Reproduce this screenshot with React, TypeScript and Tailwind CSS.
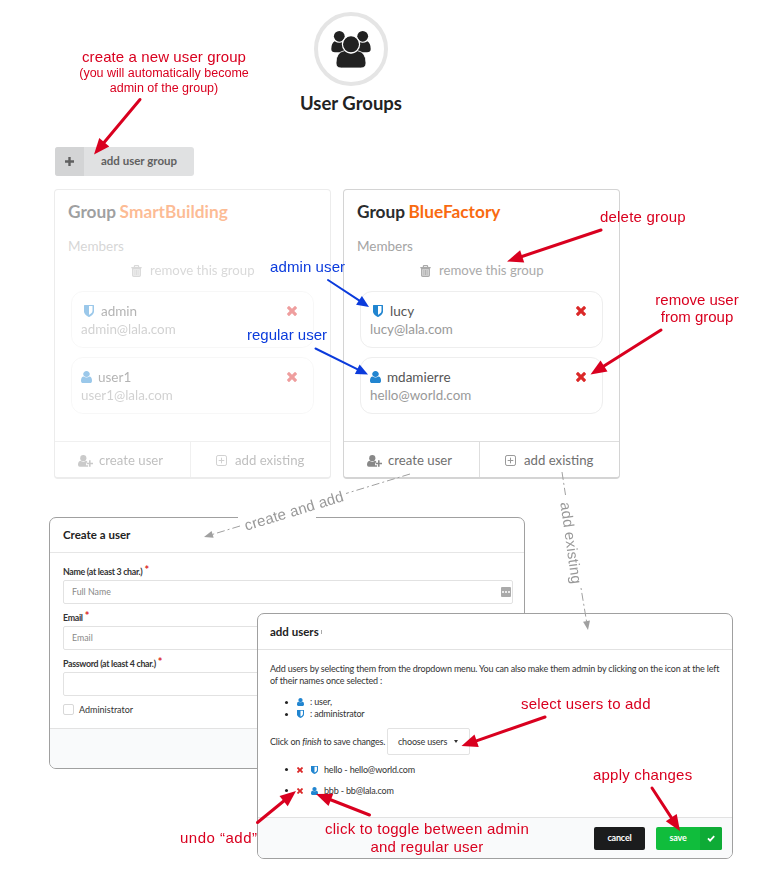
import type { ReactNode } from "react";

type IconProps = { className?: string };

function UserIcon({ className }: IconProps) {
  return (
    <svg viewBox="0 0 1280 1536" fill="currentColor" preserveAspectRatio="none" className={className}>
      <path d="M1280 1271q0 109-62.5 187t-150.5 78H213q-88 0-150.5-78T0 1271q0-85 8.5-160.5t31.5-152 58.5-131 94-89T327 704q131 128 313 128t313-128q76 0 134.5 34.5t94 89 58.5 131 31.5 152 8.5 160.5zm-256-887q0 159-112.5 271.5T640 768 368.5 655.5 256 384t112.5-271.5T640 0t271.5 112.5T1024 384z" />
    </svg>
  );
}

function ShieldIcon({ className }: IconProps) {
  return (
    <svg viewBox="0 64 1280 1536" fill="currentColor" preserveAspectRatio="none" className={className}>
      <path d="M1088 832V192H640v1137q119-63 213-137 235-184 235-360zm192-704v768q0 86-33.5 170.5t-83 150-118 127.5-126.5 103-121 77.5-89.5 49.5-42.5 20q-12 6-26 6t-26-6q-16-7-42.5-20t-89.5-49.5-121-77.5-126.5-103-118-127.5-83-150T0 896V128q0-26 19-45t45-19h1152q26 0 45 19t19 45z" />
    </svg>
  );
}

function CrossIcon({ className }: IconProps) {
  return (
    <svg viewBox="110 366 1188 1188" fill="currentColor" className={className}>
      <path d="M1298 1322q0 40-28 68l-136 136q-28 28-68 28t-68-28l-294-294-294 294q-28 28-68 28t-68-28l-136-136q-28-28-28-68t28-68l294-294-294-294q-28-28-28-68t28-68l136-136q28-28 68-28t68 28l294 294 294-294q28-28 68-28t68 28l136 136q28 28 28 68t-28 68l-294 294 294 294q28 28 28 68z" />
    </svg>
  );
}

function TrashIcon({ className }: IconProps) {
  return (
    <svg viewBox="0 0 11 12" className={className}>
      <path d="M3.4 2.2V1.3q0-.7.7-.7h2.8q.7 0 .7.7v.9M.3 2.6h10.4" fill="none" stroke="currentColor" strokeWidth="1.2" />
      <path d="M1.6 3.6h7.8v6.6q0 1.2-1.2 1.2H2.8q-1.2 0-1.2-1.2z" fill="currentColor" fillOpacity="0.45" stroke="currentColor" strokeWidth="1.1" />
      <path d="M3.9 5v5M5.5 5v5M7.1 5v5" stroke="currentColor" strokeWidth="0.8" />
    </svg>
  );
}

function UserPlusIcon({ className }: IconProps) {
  return (
    <svg viewBox="0 0 15 12" fill="currentColor" className={className}>
      <circle cx="5.3" cy="3.2" r="3.1" />
      <path d="M2.6 5.8q1.2 1.1 2.7 1.1T8 5.8q.8.1 1.2.7v1.3H8v2.4h2.1v1.500H1.8Q0 11.7 0 9.8q0-3.6 2.6-4z" />
      <path d="M11 5.3h1.6v2.4H15v1.6h-2.4v2.4H11V9.3H8.7V7.7H11z" />
    </svg>
  );
}

function PlusSquareIcon({ className }: IconProps) {
  return (
    <svg viewBox="0 0 11 11" fill="none" stroke="currentColor" className={className}>
      <rect x="0.5" y="0.5" width="10" height="10" rx="1.6" />
      <path d="M5.5 2.7v5.6M2.7 5.5h5.6" />
    </svg>
  );
}

function GroupIcon({ className }: IconProps) {
  return (
    <svg viewBox="0 0 40 38" fill="#222" className={className}>
      <circle cx="8.3" cy="6.3" r="5.4" />
      <circle cx="31.7" cy="6.3" r="5.4" />
      <path d="M3.6 11.2q4.600 3 8.600.4l4 2v8.600H4Q.3 22.200.3 19q0-5.800 3.300-7.800z" />
      <path d="M36.400 11.200q-4.600 3-8.600.4l-4 2v8.600H36q3.700 0 3.700-3.200 0-5.800-3.300-7.800z" />
      <path d="M13.600 20.700q6.400 5 12.800 0 8.600 1.200 8.600 12.300 0 5-5.200 5H10.200Q5 38 5 33q0-11.100 8.600-12.300z" stroke="#fff" strokeWidth="0.800" />
      <circle cx="20" cy="14.300" r="8.600" stroke="#fff" strokeWidth="1.200" />
    </svg>
  );
}

type Member = { name: string; email: string; admin: boolean };

function MemberBox({ member }: { member: Member }) {
  return (
    <div className="flex h-[57px] flex-col rounded-xl border border-[#eeeeee] pl-[9px] pt-[9px]">
      <div className="flex h-5 items-center">
        {member.admin ? (
          <ShieldIcon className="ml-[3px] mr-[7px] h-3 w-[10px] text-[#2185d0]" />
        ) : (
          <UserIcon className="mr-[6px] h-3 w-[11px] text-[#2185d0]" />
        )}
        <span className="text-[13.500px] leading-5 text-[#555]">{member.name}</span>
        <CrossIcon className="ml-auto mr-[16px] size-[10px] text-[#db2828]" />
      </div>
      <span className="-mt-px text-[13.400px] leading-[18px] text-[#999]">{member.email}</span>
    </div>
  );
}

function GroupCard({ name, members, faded }: { name: string; members: Member[]; faded?: boolean }) {
  return (
    <section
      className={
        "flex h-[290px] w-[277px] flex-col rounded border border-b-2 border-[#d4d4d4] bg-white " +
        (faded ? "opacity-45" : "")
      }
    >
      <h2 className="flex h-11 items-center gap-[3.500px] pl-[13px] text-[17.300px] font-bold text-[#2a2c2e]">
        Group <span className="text-[#f96a10]">{name}</span>
      </h2>
      <p className="flex h-6 items-center pl-[13px] text-[13.500px] text-[#a4a4a4]">Members</p>
      <div className="flex h-[25px] items-center pl-[76px] text-[13.200px] text-[#aaa]">
        <TrashIcon className="mr-2 h-3 w-[11px]" />
        remove this group
      </div>
      <div className="mt-[8px] flex flex-col gap-[9px] pl-4 pr-4">
        {members.map((m) => (
          <MemberBox key={m.name} member={m} />
        ))}
      </div>
      <div className="mt-auto flex h-9 border-t border-[#dedede] text-[13.200px] text-[#707070]">
        <div className="flex w-[136px] items-center border-r border-[#dedede] pl-[23px] pt-[2px]">
          <UserPlusIcon className="mr-[6px] h-3 w-[15px] text-[#888]" />
          create user
        </div>
        <div className="flex items-center pl-[25px] pt-[2px]">
          <PlusSquareIcon className="mb-px mr-2 size-[11px] text-[#999]" />
          add existing
        </div>
      </div>
    </section>
  );
}

function Field({ label, placeholder, badge }: { label: string; placeholder?: string; badge?: boolean }) {
  return (
    <div className="mb-[5px]">
      <div className="flex h-[17px] items-center text-[8.800px] font-bold tracking-[-0.300px] text-[#333]">
        {label}
        <span className="-mt-[5px] ml-[2px] text-[11px] leading-none text-[#db2828]">*</span>
      </div>
      <div className="flex h-6 w-[450px] items-center justify-between rounded-[2px] border border-[#e2e2e2] pl-[8px] pr-px text-[8.800px] text-[#888]">
        <span>{placeholder}</span>
        {badge && (
          <span className="flex h-[10px] w-[10px] items-center justify-center gap-px rounded-[1px] bg-[#aaa]">
            <i className="size-[2px] rounded-full bg-white" />
            <i className="size-[2px] rounded-full bg-white" />
            <i className="size-[2px] rounded-full bg-white" />
          </span>
        )}
      </div>
    </div>
  );
}

function CreateUserDialog() {
  return (
    <section className="ml-[49px] mt-[38px] flex h-[252px] w-[476px] flex-col overflow-hidden rounded-[7px] border border-[#a0a0a0] bg-white">
      <h3 className="flex h-[35px] shrink-0 items-center border-b border-[#e6e6e6] pl-[13px] text-[11.500px] font-bold text-[#222]">
        Create a user
      </h3>
      <div className="flex flex-col pl-[13px] pt-[10px]">
        <Field label="Name (at least 3 char.)" placeholder="Full Name" badge />
        <Field label="Email" placeholder="Email" />
        <Field label="Password (at least 4 char.)" />
        <div className="mt-[2px] flex items-center gap-[5px] text-[9px] text-[#333]">
          <span className="size-[11px] rounded-[2px] border border-[#d8d8d8]" />
          Administrator
        </div>
      </div>
      <div className="mt-auto h-10 border-t border-[#e2e2e2] bg-[#f9fafb]" />
    </section>
  );
}

function Bullet({ className, children }: { className: string; children: ReactNode }) {
  return (
    <li className={"flex items-center " + className}>
      <span className="mr-2 size-[3px] rounded-full bg-[#222]" />
      {children}
    </li>
  );
}

function AddUsersDialog() {
  return (
    <section className="relative -mt-[156px] ml-[257px] flex h-[246px] w-[476px] flex-col overflow-hidden rounded-[7px] border border-[#a0a0a0] bg-white text-[9px] tracking-[-0.180px] text-[#333]">
      <h3 className="flex h-9 shrink-0 items-center border-b border-[#e2e2e2] pl-3 text-[11.500px] font-bold tracking-normal text-[#222]">
        add users
        <span className="ml-[2px] h-1 w-px bg-[#aaa]" />
      </h3>
      <div className="pl-3">
        <p className="mt-[13px] whitespace-nowrap leading-3">
          Add users by selecting them from the dropdown menu. You can also make them admin by clicking on the icon at the left
          <br />
          of their names once selected :
        </p>
        <ul className="mt-[9px] pl-[15px]">
          <Bullet className="h-3">
            <UserIcon className="ml-px mr-[6px] h-2 w-[7px] text-[#2185d0]" />: user,
          </Bullet>
          <Bullet className="h-3">
            <ShieldIcon className="ml-px mr-[6px] h-2 w-[7px] text-[#2185d0]" />: administrator
          </Bullet>
        </ul>
        <div className="mt-[8px] flex items-center">
          <span className="w-[117px]">
            Click on <em>finish</em> to save changes.
          </span>
          <div className="flex h-[27px] w-[83px] items-center rounded-[2px] border border-[#e2e2e2] pl-[10px]">
            choose users
            <span className="ml-[7px] border-x-[2.500px] border-t-[3px] border-x-transparent border-t-[#333]" />
          </div>
        </div>
        <ul className="mt-1 pl-[15px]">
          <Bullet className="h-[21px]">
            <CrossIcon className="ml-px mr-[8px] size-[6px] text-[#db2828]" />
            <ShieldIcon className="mr-[6px] h-2 w-[7px] text-[#2185d0]" />
            hello - hello@world.com
          </Bullet>
          <Bullet className="h-[21px]">
            <CrossIcon className="ml-px mr-[8px] size-[6px] text-[#db2828]" />
            <UserIcon className="mr-[6px] h-2 w-[7px] text-[#2185d0]" />
            bbb - bb@lala.com
          </Bullet>
        </ul>
      </div>
      <footer className="mt-auto flex h-[41px] shrink-0 items-center justify-end gap-[11px] border-t border-[#e2e2e2] bg-[#f9fafb] pr-[10px] text-[9px] font-bold text-white">
        <button className="h-[23px] w-[51px] rounded-[2px] bg-[#1b1c1d]">cancel</button>
        <button className="flex h-[23px] w-[66px] overflow-hidden rounded-[2px] bg-[#10bd3c]">
          <span className="flex h-full w-11 items-center justify-center">save</span>
          <span className="flex h-full flex-1 items-center justify-center bg-[#0eab36]">
            <svg viewBox="0 0 8 7" className="h-[7px] w-2" fill="none" stroke="#fff" strokeWidth="1.800">
              <path d="M1 3.400l2.100 2.200L7.200 1.200" />
            </svg>
          </span>
        </button>
      </footer>
    </section>
  );
}

type Pt = [number, number];

function Arrow({ from, to, color, width, head, half, dash }: { from: Pt; to: Pt; color: string; width: number; head: number; half: number; dash?: string }) {
  const len = Math.hypot(to[0] - from[0], to[1] - from[1]);
  const ux = (to[0] - from[0]) / len;
  const uy = (to[1] - from[1]) / len;
  const bx = to[0] - ux * head;
  const by = to[1] - uy * head;
  return (
    <g>
      <line x1={from[0]} y1={from[1]} x2={bx + ux} y2={by + uy} stroke={color} strokeWidth={width} strokeDasharray={dash} strokeLinecap={dash ? "butt" : "round"} />
      <polygon fill={color} points={`${to[0]},${to[1]} ${bx - uy * half},${by + ux * half} ${bx + uy * half},${by - ux * half}`} />
    </g>
  );
}

const redArrows: [Pt, Pt][] = [
  [[140, 99.500], [94, 154.500]],
  [[601, 230], [507, 261.500]],
  [[661, 330], [590.500, 374.500]],
  [[545, 717], [461.500, 746]],
  [[652, 788], [680, 831]],
  [[257.500, 822.500], [296, 791]],
  [[369.500, 815], [316, 794]],
];

const blueArrows: [Pt, Pt][] = [
  [[328, 280], [369, 307]],
  [[315.500, 348.500], [368, 374.500]],
];

function Annotations() {
  return (
    <div className="pointer-events-none absolute inset-0 whitespace-nowrap font-['Liberation_Sans',sans-serif] text-[15px] leading-[18px] tracking-[0.200px] text-[#d9001f]">
      <div className="absolute left-[238px] top-[515px] h-1 w-[78px] bg-white" />
      <svg viewBox="0 0 760 885" className="absolute left-0 top-0 h-[885px] w-[760px]">
        {redArrows.map(([from, to], i) => (
          <Arrow key={i} from={from} to={to} color="#d9001f" width={3} head={16} half={6.500} />
        ))}
        {blueArrows.map(([from, to], i) => (
          <Arrow key={i} from={from} to={to} color="#0b3bdc" width={2} head={12} half={5.300} />
        ))}
        <line x1="410" y1="474" x2="346" y2="493.500" stroke="#a0a0a0" strokeDasharray="8 3 2 3" />
        <line x1="562" y1="472" x2="565.500" y2="495" stroke="#a0a0a0" strokeDasharray="8 3 2 3" />
        <Arrow from={[240, 526]} to={[204, 537]} color="#a0a0a0" width={1} head={9} half={3.500} dash="8 3 2 3" />
        <Arrow from={[581, 588]} to={[588, 630]} color="#a0a0a0" width={1} head={9} half={3.500} dash="2 3 8 3" />
      </svg>
      <span className="absolute left-[82px] top-[48px] tracking-[0.100px]">create a new user group</span>
      <div className="absolute left-[79px] top-[66px] w-[170px] text-center text-[12.500px] leading-[15px] tracking-normal">
        (you will automatically become
        <br />
        admin of the group)
      </div>
      <span className="absolute left-[600px] top-[208px]">delete group</span>
      <div className="absolute left-[647px] top-[291px] w-[100px] text-center leading-[17px] tracking-normal">
        remove user
        <br />
        from group
      </div>
      <span className="absolute left-[270px] top-[258px] tracking-[0.100px] text-[#0b3bdc]">admin user</span>
      <span className="absolute left-[247px] top-[326px] tracking-normal text-[#0b3bdc]">regular user</span>
      <span className="absolute left-[521px] top-[695px]">select users to add</span>
      <span className="absolute left-[593px] top-[766px]">apply changes</span>
      <span className="absolute left-[180px] top-[829px] tracking-[0.500px]">undo “add”</span>
      <div className="absolute left-[317px] top-[820px] w-[220px] text-center tracking-[0.250px]">
        click to toggle between admin
        <br />
        and regular user
      </div>
      <span className="absolute left-[294px] top-[511px] -translate-x-1/2 -translate-y-1/2 rotate-[-17deg] text-[#999]">create and add</span>
      <span className="absolute left-[571px] top-[543px] -translate-x-1/2 -translate-y-1/2 rotate-[82deg] text-[#999]">add existing</span>
    </div>
  );
}

export default function App() {
  return (
    <main className="relative h-[885px] w-[760px] overflow-hidden bg-white font-[Lato,sans-serif]">
      <header className="flex w-[702px] flex-col items-center pt-3">
        <div className="flex size-[74px] items-center justify-center rounded-full border-4 border-[#e5e5e5]">
          <GroupIcon className="h-[38px] w-10" />
        </div>
        <h1 className="mt-[5px] text-[18.500px] font-bold leading-6 text-[#222]">User Groups</h1>
      </header>
      <button className="ml-[55px] mt-8 flex h-[29px] w-[139px] overflow-hidden rounded-[3px] bg-[#e0e1e2] text-[11.500px] font-bold text-[#606060]">
        <span className="flex h-full w-[29px] items-center justify-center bg-[#d3d4d5]">
          <svg viewBox="0 0 9 9" className="size-[9px]" stroke="#606060" strokeWidth="2.400">
            <path d="M4.500 0v9M0 4.500h9" />
          </svg>
        </span>
        <span className="flex h-full flex-1 items-center justify-center pb-px">add user group</span>
      </button>
      <div className="ml-[54px] mt-[13px] flex gap-3">
        <GroupCard
          faded
          name="SmartBuilding"
          members={[
            { name: "admin", email: "admin@lala.com", admin: true },
            { name: "user1", email: "user1@lala.com", admin: false },
          ]}
        />
        <GroupCard
          name="BlueFactory"
          members={[
            { name: "lucy", email: "lucy@lala.com", admin: true },
            { name: "mdamierre", email: "hello@world.com", admin: false },
          ]}
        />
      </div>
      <CreateUserDialog />
      <AddUsersDialog />
      <Annotations />
    </main>
  );
}
